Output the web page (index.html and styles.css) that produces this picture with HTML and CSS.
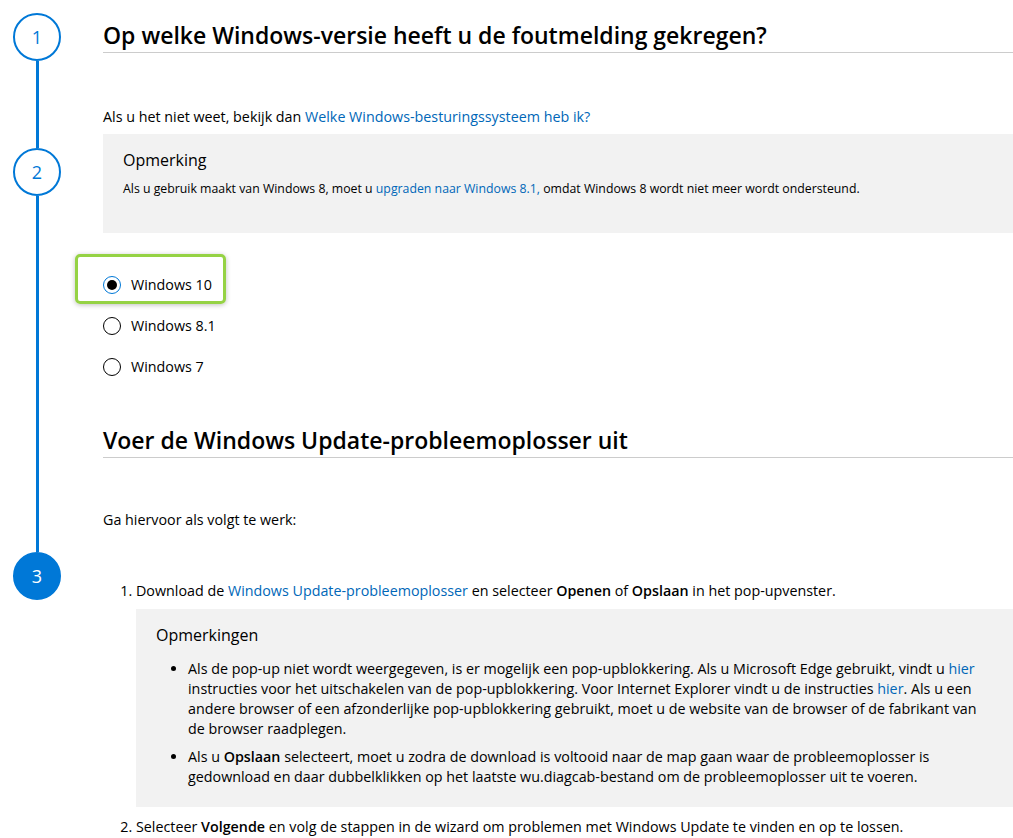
FILE: index.html
```html
<!DOCTYPE html>
<html lang="nl">
<head>
  <meta charset="UTF-8" />
  <title>Windows Update-probleemoplosser</title>
  <link rel="stylesheet" href="styles.css">
</head>
<body>
  <div class="page">
    <!-- stappen links -->
    <div class="steps">
      <div class="step">1</div>
      <div class="step__line step__line--short"></div>
      <div class="step">2</div>
      <div class="step__line step__line--long"></div>
      <div class="step step--active">3</div>
    </div>

    <main class="content">
      <h2 class="title">Op welke Windows-versie heeft u de foutmelding gekregen?</h2>
      <p class="text text--intro">Als u het niet weet, bekijk dan <a href="#">Welke Windows-besturingssysteem heb ik?</a></p>

      <div class="note">
        <div class="note__title">Opmerking</div>
        <p class="note__text">Als u gebruik maakt van Windows 8, moet u <a href="#">upgraden naar Windows 8.1,</a> omdat Windows 8 wordt niet meer wordt ondersteund.</p>
      </div>

      <div class="options">
        <label class="option option--selected"><span class="radio radio--on"></span>Windows 10</label>
        <label class="option"><span class="radio"></span>Windows 8.1</label>
        <label class="option"><span class="radio"></span>Windows 7</label>
      </div>

      <h2 class="title title--second">Voer de Windows Update-probleemoplosser uit</h2>
      <p class="text text--steps">Ga hiervoor als volgt te werk:</p>

      <ol class="list">
        <li>
          Download de <a href="#">Windows Update-probleemoplosser</a> en selecteer <b>Openen</b> of <b>Opslaan</b> in het pop-upvenster.
          <div class="note note--list">
            <div class="note__title">Opmerkingen</div>
            <ul class="note__list">
              <li>Als de pop-up niet wordt weergegeven, is er mogelijk een pop-upblokkering. Als u Microsoft Edge gebruikt, vindt u <a href="#">hier</a> instructies voor het uitschakelen van de pop-upblokkering. Voor Internet Explorer vindt u de instructies <a href="#">hier</a>. Als u een andere browser of een afzonderlijke pop-upblokkering gebruikt, moet u de website van de browser of de fabrikant van de browser raadplegen.</li>
              <li>Als u <b>Opslaan</b> selecteert, moet u zodra de download is voltooid naar de map gaan waar de probleemoplosser is gedownload en daar dubbelklikken op het laatste wu.diagcab-bestand om de probleemoplosser uit te voeren.</li>
            </ul>
          </div>
        </li>
        <li>Selecteer <b>Volgende</b> en volg de stappen in de wizard om problemen met Windows Update te vinden en op te lossen.</li>
      </ol>
    </main>
  </div>
</body>
</html>
```

FILE: styles.css
```css
body {
  margin: 0;
  font-family: 'Open Sans', 'Noto Sans', sans-serif;
  font-size: 14.3px;
  color: #000;
  background: #fff;
}

a {
  color: #0067b8;
  text-decoration: none;
}

b {
  font-weight: 600;
}

.page {
  display: flex;
}

/* stappen */
.steps {
  padding: 13px 0 0 13px;
  display: flex;
  flex-direction: column;
  align-items: center;
  width: 48px;
  margin-right: 42px;
}

.step {
  width: 44px;
  height: 44px;
  border: 2px solid #0078d7;
  border-radius: 50%;
  display: flex;
  align-items: center;
  justify-content: center;
  color: #0078d7;
  font-size: 18px;
  flex-shrink: 0;
}

.step--active {
  background: #0078d7;
  color: #fff;
}

.step__line {
  width: 3px;
  background: #0078d7;
}

.step__line--short {
  height: 87px;
}

.step__line--long {
  height: 356px;
}

/* inhoud */
.content {
  flex: 1;
}

.title {
  margin: 0;
  padding: 20px 0 2px;
  font-size: 23px;
  font-weight: 600;
  line-height: 30px;
  border-bottom: 1px solid #ccc;
}

.title--second {
  padding-top: 0;
  margin-top: 38px;
}

.text {
  margin: 0;
  line-height: 20px;
}

.text--intro {
  margin-top: 54px;
}

.text--steps {
  margin-top: 52px;
}

.note {
  background: #f2f2f2;
  margin-top: 7px;
  padding: 14px 20px 35px;
}

.note__title {
  font-size: 16px;
  line-height: 24px;
}

.note__text {
  margin: 8px 0 0;
  font-size: 12.3px;
  line-height: 18px;
}

.options {
  margin-top: 31px;
}

.option {
  display: flex;
  align-items: center;
  height: 41px;
  position: relative;
}

/* groene markering rond de gekozen optie */
.option--selected::before {
  content: "";
  position: absolute;
  left: -28px;
  top: -10px;
  width: 145px;
  height: 44px;
  border: 3px solid #95d244;
  border-radius: 5px;
  box-shadow: 0 1px 5px rgba(0, 0, 0, 0.25);
}

.radio {
  width: 18px;
  height: 18px;
  border: 1px solid #000;
  border-radius: 50%;
  box-sizing: border-box;
  margin: 0 10px 0 0;
  display: flex;
  align-items: center;
  justify-content: center;
}

.radio--on {
  border-color: #0078d7;
}

.radio--on::after {
  content: "";
  width: 10px;
  height: 10px;
  border-radius: 50%;
  background: #000;
}

.list {
  margin: 51px 0 0;
  padding-left: 33px;
  line-height: 20px;
}

.list > li {
  margin-bottom: 10px;
}

.note--list {
  margin: 8px 0 10px;
  padding: 14px 20px 12px;
}

.note__list {
  margin: 12px 0 0;
  padding-left: 32px;
  line-height: 20px;
  list-style: disc;
}

.note__list li {
  margin-bottom: 8px;
}
```
